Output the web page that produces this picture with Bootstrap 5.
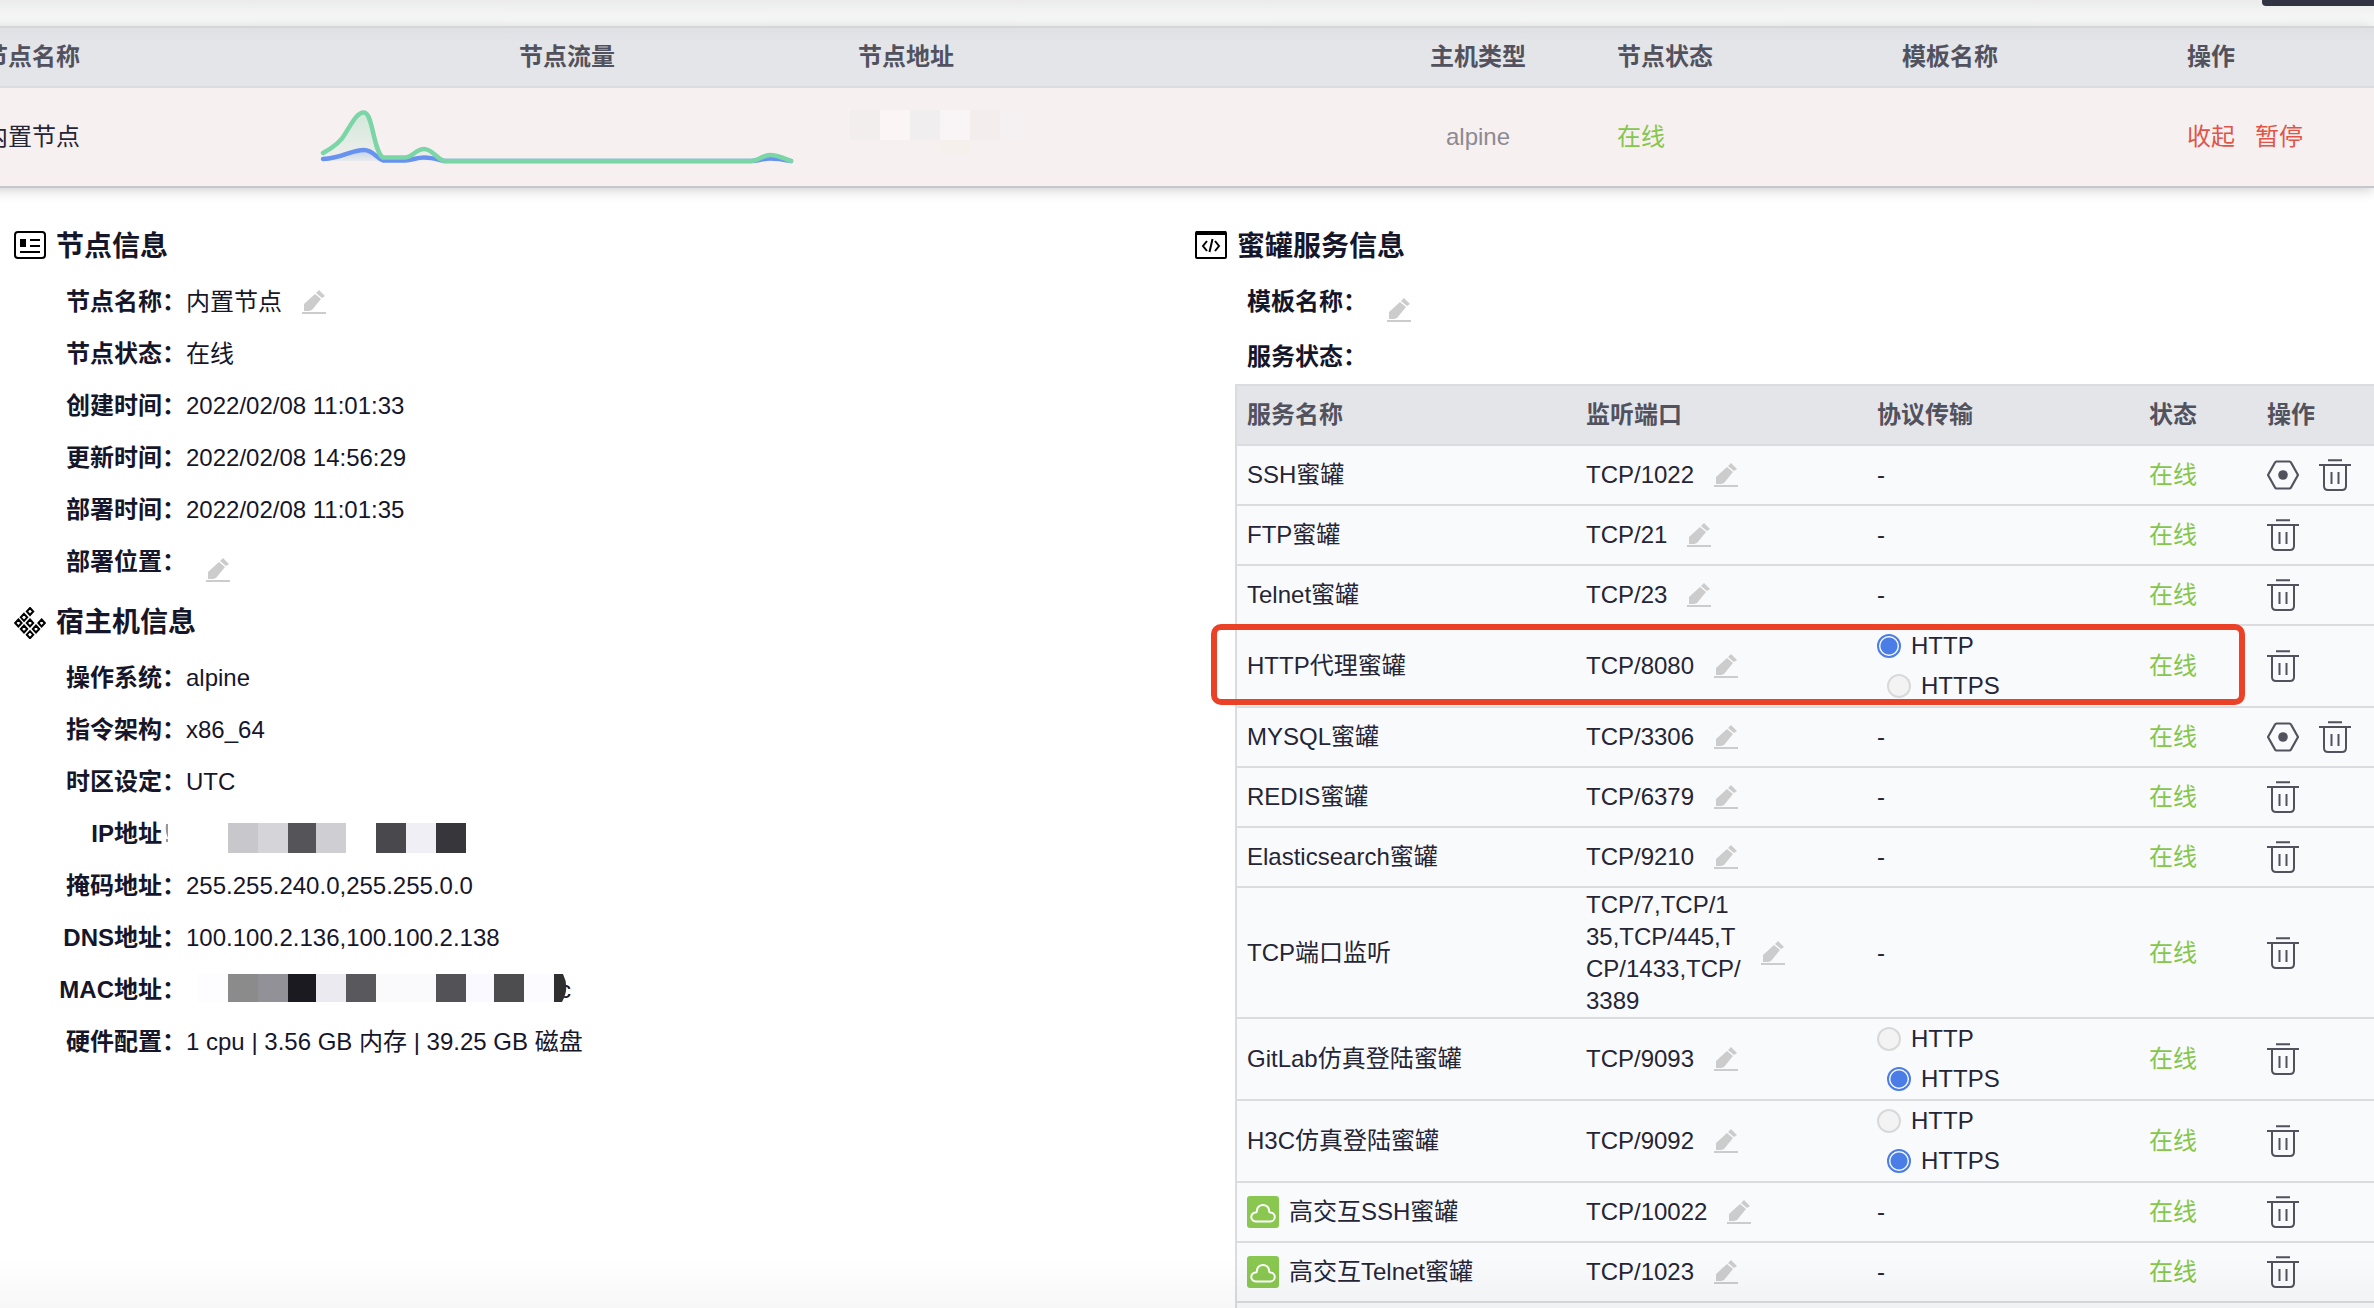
<!DOCTYPE html>
<html lang="zh-CN">
<head>
<meta charset="utf-8">
<meta name="viewport" content="width=device-width, initial-scale=1">
<title>节点管理</title>
<link href="https://cdn.jsdelivr.net/npm/bootstrap@5.3.0/dist/css/bootstrap.min.css" rel="stylesheet">
<style>
  body { font-family: "Liberation Sans", "Noto Sans CJK SC", sans-serif; font-size: 24px; line-height: 32px; color: #16162a; background: #fff; height: 100vh; overflow: hidden; }
  svg { display: block; flex: none; }
  .page-top { height: 26px; background: linear-gradient(#ebebeb, #fafcfb); }
  .top-action { width: 112px; height: 6px; background: #333443; border-radius: 0 0 0 4px; }
  .node-wrap { margin-left: -32px; border-bottom: 2px solid #c5c6ce; box-shadow: 0 2px 12px rgba(0, 0, 0, .2); }
  .grid { table-layout: fixed; width: 100%; margin: 0; border-collapse: separate; border-spacing: 0; }
  .grid th { background: #e4e5e9; color: #52525e; font-weight: 600; height: 62px; border: solid #dadce0; border-width: 2px 0; padding: 0 16px; }
  .grid td { padding: 0 16px; }
  .node-grid th { background: linear-gradient(#dfe0e4, #e4e5e9 14px); border-top-color: #d5d6da; }
  .node-grid td { background: #f7f0f0; height: 98px; color: #252535; }
  .grid .host { color: #8c8a92; }
  .grid .online { color: #85c64c; }
  .addr-blocks { margin-left: -8px; }
  .act-link { color: #df5549; text-decoration: none; }
  .c-name { width: 324px; } .c-flow { width: 550px; } .c-host { width: 246px; } .c-wide { width: 285px; } .c-ops { width: 203px; }
  .node-panel { padding-left: 14px; }
  .panel-title { height: 60px; font-size: 28px; font-weight: 700; margin: 0; gap: 10px; padding-top: 2px; }
  .info-row { height: 52px; }
  .info-label { width: 172px; text-align: right; font-weight: 700; flex: none; }
  .plain-btn { border: 0; background: none; padding: 0; color: #52525e; }
  .pencil { color: #ccc; margin-left: 20px; }
  .pencil-low { align-self: flex-end; margin-bottom: 6px; }
  .mac-blocks { position: relative; z-index: 1; }
  .mac-tail { margin-left: -9px; }
  .svc-label { font-weight: 700; padding-left: 52px; }
  .svc-state { height: 56px; padding-top: 2px; }
  .svc-wrap { margin-left: 40px; border-left: 2px solid #dadce0; }
  .svc-grid th, .svc-grid td { padding: 0 10px; }
  .svc-grid td { background: #f9fafc; color: #252535; border-bottom: 2px solid #dadce0; height: 60px; }
  .svc-grid .tall td { height: 131px; }
  .svc-port { width: 291px; } .svc-proto { width: 272px; } .svc-online { width: 118px; } .svc-ops { width: 117px; }
  .port-list { width: 155px; word-break: break-all; }
  .ops { gap: 20px; }
  .cloud { gap: 10px; }
  .proto-opt { height: 40px; gap: 10px; }
  .proto-opt + .proto-opt { padding-left: 10px; }
  .proto-opt .form-check-input { width: 24px; height: 24px; margin: 0; flex: none; background: #f3f3f3; border: 2px solid #d9d9d9; }
  .proto-opt .form-check-input:checked { border-color: #4a7de6; background: radial-gradient(circle, #4a7de6 8px, #fff 9px) border-box; }
  .focus-row { position: relative; }
  .focus-frame { position: absolute; left: -26px; top: -2px; right: 129px; bottom: 3px; border: 6px solid #ea4127; border-radius: 10px; pointer-events: none; }
  .page-fade { height: 50px; background: linear-gradient(rgba(0, 0, 0, 0), rgba(0, 0, 0, .03)); pointer-events: none; }
</style>
</head>
<body>
<svg width="0" height="0" class="position-absolute" aria-hidden="true">
  <symbol id="i-pencil" viewBox="0 0 24 24"><path fill="currentColor" d="M2 14 13 4l6 5-9 11-3 1H2zM14 3l3-3 6 6-3 2z"/><path fill="currentColor" d="M0 22h24v2H0z"/></symbol>
  <symbol id="i-trash" viewBox="0 0 32 32"><path fill="none" stroke="currentColor" stroke-width="2" d="M9 1.200h14M0 6h32M5 6v21q0 4 4 4h14q4 0 4-4V6M12.500 13v12M19.500 13v12"/></symbol>
  <symbol id="i-hex" viewBox="0 0 32 32"><path fill="none" stroke="currentColor" stroke-width="2.200" stroke-linejoin="round" d="M9.500 2.500h13Q23.500 2.500 24 3.500L31 16l-7 12.500q-.5 1-1.500 1h-13q-1 0-1.500-1L1 16 8 3.500q.5-1 1.500-1z"/><circle cx="16" cy="16" r="4.800" fill="currentColor"/></symbol>
  <symbol id="i-cloud" viewBox="0 0 32 32"><rect width="32" height="32" rx="3" fill="#89c750"/><path fill="none" stroke="#fff" stroke-width="2" d="M9 25.500a4.500 4.500 0 0 1-.5-9q1.500-.3 1.500-2a6 5.500 0 0 1 12 0q0 1.700 1.500 2a4.500 4.500 0 0 1-.5 9z"/></symbol>
</svg>

<header class="page-top d-flex justify-content-end"><div class="top-action"></div></header>

<div class="node-wrap">
  <table class="grid node-grid align-middle">
    <colgroup><col class="c-name"><col class="c-flow"><col><col class="c-host"><col class="c-wide"><col class="c-wide"><col class="c-ops"></colgroup>
    <thead><tr><th>节点名称</th><th class="text-center">节点流量</th><th>节点地址</th><th class="text-center">主机类型</th><th>节点状态</th><th>模板名称</th><th>操作</th></tr></thead>
    <tbody><tr>
      <td>内置节点</td>
      <td>
        <svg width="518" height="60" viewBox="0 0 518 60" role="img" aria-label="节点流量">
          <defs>
            <linearGradient id="gf" x1="0" y1="0" x2="0" y2="1"><stop offset="0" stop-color="#7bd5a7" stop-opacity=".3"/><stop offset="1" stop-color="#7bd5a7" stop-opacity=".05"/></linearGradient>
            <linearGradient id="bf" x1="0" y1="0" x2="0" y2="1"><stop offset="0" stop-color="#6792f0" stop-opacity=".3"/><stop offset="1" stop-color="#6792f0" stop-opacity=".05"/></linearGradient>
          </defs>
          <path fill="url(#gf)" d="M15 46C26 40 33 35 37 27 46 12 50 5.500 56 5.500 65 5.500 65 42 75 50.500H97C105 50 108 42 116 42S128 50 136 54H15z"/>
          <path fill="url(#bf)" d="M15 52C36 51 42 43 56 43 65 43 68 50 75 54H15z"/>
          <g fill="none" stroke-width="4.500" stroke-linecap="round">
            <path stroke="#6792f0" d="M15 52C36 51 42 43 56 43 65 43 68 51 75 53.500H97C105 53 108 50.500 116 50.500S128 52 136 54H443C450 54 455 51.500 462 51.500S478 53 483 54"/>
            <path stroke="#7bd5a7" d="M15 46C26 40 33 35 37 27 46 12 50 5.500 56 5.500 65 5.500 65 44 75 50.500H97C105 50 108 42 116 42S128 51 136 54H443C450 54 455 48 462 48S478 52 483 54"/>
          </g>
        </svg>
      </td>
      <td>
        <svg class="addr-blocks" width="182" height="54" viewBox="0 0 182 54" role="img" aria-label="节点地址已隐藏">
          <path fill="#f3eeee" d="M0 0h30v30H0z"/><path fill="#fbf5f5" d="M30 0h30v30H30z"/><path fill="#f1eeef" d="M60 0h30v30H60z"/><path fill="#f9f5f7" d="M90 0h30v30H90z"/><path fill="#f3eded" d="M120 0h30v30h-30z"/><path fill="#f5f1f2" d="M150 0h26v30h-26z"/><path fill="#f5f0eb" d="M90 30h30v14H90z"/>
        </svg>
      </td>
      <td class="host text-center">alpine</td>
      <td class="online">在线</td>
      <td></td>
      <td><div class="d-flex ops"><a href="#" class="act-link">收起</a><a href="#" class="act-link">暂停</a></div></td>
    </tr></tbody>
  </table>
</div>

<main class="row g-0 pt-4">
  <section class="col-6 pt-1 node-panel">
    <h2 class="panel-title d-flex align-items-center">
      <svg width="32" height="32" viewBox="0 0 32 32"><rect x="1" y="1" width="30" height="26" rx="3" fill="none" stroke="#000" stroke-width="2"/><path d="M6 8h6v8H6zM16 8h10v2H16zM16 14h10v2H16zM6 20h20v2H6z"/></svg>
      节点信息
    </h2>
    <div class="info-row d-flex align-items-center"><span class="info-label">节点名称：</span><span>内置节点</span><button class="plain-btn pencil" aria-label="编辑节点名称"><svg width="24" height="24"><use href="#i-pencil"/></svg></button></div>
    <div class="info-row d-flex align-items-center"><span class="info-label">节点状态：</span><span>在线</span></div>
    <div class="info-row d-flex align-items-center"><span class="info-label">创建时间：</span><span>2022/02/08 11:01:33</span></div>
    <div class="info-row d-flex align-items-center"><span class="info-label">更新时间：</span><span>2022/02/08 14:56:29</span></div>
    <div class="info-row d-flex align-items-center"><span class="info-label">部署时间：</span><span>2022/02/08 11:01:35</span></div>
    <div class="info-row d-flex align-items-center"><span class="info-label">部署位置：</span><button class="plain-btn pencil pencil-low" aria-label="编辑部署位置"><svg width="24" height="24"><use href="#i-pencil"/></svg></button></div>
    <h2 class="panel-title d-flex align-items-center mt-1">
      <svg width="32" height="32" viewBox="0 0 32 32" fill="none" stroke="#000" stroke-width="2"><path d="M16 1l3.200 3.500L16 8l-3.200-3.500zM10 6.800l3.200 3.500L10 13.800l-3.200-3.500zM4.400 12.500 7.600 16l-3.200 3.500L1.200 16zM16 12.500l3.200 3.500-3.200 3.500-3.200-3.500zM27.600 12.500l3.200 3.500-3.200 3.500-3.200-3.500zM10 18.500l3.200 3.500-3.200 3.500L6.800 22zM22 18.500l3.200 3.500-3.200 3.500-3.200-3.500zM16 24.200l3.200 3.500-3.200 3.500-3.200-3.500z"/></svg>
      宿主机信息
    </h2>
    <div class="info-row d-flex align-items-center"><span class="info-label">操作系统：</span><span>alpine</span></div>
    <div class="info-row d-flex align-items-center"><span class="info-label">指令架构：</span><span>x86_64</span></div>
    <div class="info-row d-flex align-items-center"><span class="info-label">时区设定：</span><span>UTC</span></div>
    <div class="info-row d-flex align-items-center"><span class="info-label d-flex justify-content-end">IP地址<svg width="24" height="32" viewBox="0 0 24 32"><path fill="#96959b" d="M4 6q-1 8 2 14V6zM4 21h2v3H4z"/></svg></span>
      <svg width="290" height="40" viewBox="0 0 290 40" role="img" aria-label="IP地址已隐藏"><path fill="#c8c7cc" d="M42 9h30v30H42z"/><path fill="#d5d4d9" d="M72 9h30v30H72z"/><path fill="#555459" d="M102 9h28v30h-28z"/><path fill="#cfced3" d="M130 9h30v30h-30z"/><path fill="#49484d" d="M190 9h30v30h-30z"/><path fill="#f0eff5" d="M220 9h30v30h-30z"/><path fill="#37363a" d="M250 9h30v30h-30z"/></svg></div>
    <div class="info-row d-flex align-items-center"><span class="info-label">掩码地址：</span><span>255.255.240.0,255.255.0.0</span></div>
    <div class="info-row d-flex align-items-center"><span class="info-label">DNS地址：</span><span>100.100.2.136,100.100.2.138</span></div>
    <div class="info-row d-flex align-items-center"><span class="info-label">MAC地址：</span>
      <svg class="mac-blocks" width="382" height="32" viewBox="0 0 382 32" role="img" aria-label="MAC地址已隐藏"><path fill="#fdfcff" d="M12 0h30v28H12z"/><path fill="#8b8b8c" d="M42 0h30v28H42z"/><path fill="#929197" d="M72 0h30v28H72z"/><path fill="#1b1a20" d="M102 0h28v28h-28z"/><path fill="#ebeaf0" d="M130 0h30v28h-30z"/><path fill="#59585d" d="M160 0h30v28h-30z"/><path fill="#fafafc" d="M190 0h60v28h-60z"/><path fill="#535257" d="M250 0h30v28h-30z"/><path fill="#faf9ff" d="M280 0h28v28h-28z"/><path fill="#4d4c4e" d="M308 0h30v28h-30z"/><path fill="#fcfbff" d="M338 0h30v28h-30z"/><path fill="#2f2f30" d="M368 0h9q7 14-1 28h-8z"/></svg><span class="mac-tail">c</span></div>
    <div class="info-row d-flex align-items-center"><span class="info-label">硬件配置：</span><span>1 cpu | 3.56 GB 内存 | 39.25 GB 磁盘</span></div>
  </section>

  <section class="col-6 pt-1 ps-2">
    <h2 class="panel-title d-flex align-items-center">
      <svg width="32" height="32" viewBox="0 0 32 32" fill="none" stroke="#000" stroke-width="2"><rect x="1" y="1" width="30" height="26" rx="1"/><path stroke-width="4" d="M1 2h30"/><path d="M12 10l-4 5 4 5M20 10l4 5-4 5M17.500 8l-3 13"/></svg>
      蜜罐服务信息
    </h2>
    <div class="info-row svc-label d-flex align-items-center">模板名称：<button class="plain-btn pencil pencil-low" aria-label="编辑模板名称"><svg width="24" height="24"><use href="#i-pencil"/></svg></button></div>
    <div class="svc-state svc-label d-flex align-items-center">服务状态：</div>
    <div class="svc-wrap">
      <table class="grid svc-grid align-middle">
        <colgroup><col><col class="svc-port"><col class="svc-proto"><col class="svc-online"><col class="svc-ops"></colgroup>
        <thead><tr><th>服务名称</th><th>监听端口</th><th>协议传输</th><th>状态</th><th>操作</th></tr></thead>
        <tbody>
          <tr><td>SSH蜜罐</td><td><div class="d-flex align-items-center">TCP/1022<button class="plain-btn pencil" aria-label="编辑端口"><svg width="24" height="24"><use href="#i-pencil"/></svg></button></div></td><td>-</td><td class="online">在线</td><td><div class="d-flex ops"><button class="plain-btn" aria-label="设置"><svg width="32" height="32"><use href="#i-hex"/></svg></button><button class="plain-btn" aria-label="删除"><svg width="32" height="32"><use href="#i-trash"/></svg></button></div></td></tr>
          <tr><td>FTP蜜罐</td><td><div class="d-flex align-items-center">TCP/21<button class="plain-btn pencil" aria-label="编辑端口"><svg width="24" height="24"><use href="#i-pencil"/></svg></button></div></td><td>-</td><td class="online">在线</td><td><div class="d-flex ops"><button class="plain-btn" aria-label="删除"><svg width="32" height="32"><use href="#i-trash"/></svg></button></div></td></tr>
          <tr><td>Telnet蜜罐</td><td><div class="d-flex align-items-center">TCP/23<button class="plain-btn pencil" aria-label="编辑端口"><svg width="24" height="24"><use href="#i-pencil"/></svg></button></div></td><td>-</td><td class="online">在线</td><td><div class="d-flex ops"><button class="plain-btn" aria-label="删除"><svg width="32" height="32"><use href="#i-trash"/></svg></button></div></td></tr>
          <tr class="focus-row"><td>HTTP代理蜜罐<div class="focus-frame"></div></td><td><div class="d-flex align-items-center">TCP/8080<button class="plain-btn pencil" aria-label="编辑端口"><svg width="24" height="24"><use href="#i-pencil"/></svg></button></div></td><td><div class="proto-opt d-flex align-items-center"><input class="form-check-input" type="radio" name="p1" id="p1a" checked><label for="p1a">HTTP</label></div><div class="proto-opt d-flex align-items-center"><input class="form-check-input" type="radio" name="p1" id="p1b"><label for="p1b">HTTPS</label></div></td><td class="online">在线</td><td><div class="d-flex ops"><button class="plain-btn" aria-label="删除"><svg width="32" height="32"><use href="#i-trash"/></svg></button></div></td></tr>
          <tr><td>MYSQL蜜罐</td><td><div class="d-flex align-items-center">TCP/3306<button class="plain-btn pencil" aria-label="编辑端口"><svg width="24" height="24"><use href="#i-pencil"/></svg></button></div></td><td>-</td><td class="online">在线</td><td><div class="d-flex ops"><button class="plain-btn" aria-label="设置"><svg width="32" height="32"><use href="#i-hex"/></svg></button><button class="plain-btn" aria-label="删除"><svg width="32" height="32"><use href="#i-trash"/></svg></button></div></td></tr>
          <tr><td>REDIS蜜罐</td><td><div class="d-flex align-items-center">TCP/6379<button class="plain-btn pencil" aria-label="编辑端口"><svg width="24" height="24"><use href="#i-pencil"/></svg></button></div></td><td>-</td><td class="online">在线</td><td><div class="d-flex ops"><button class="plain-btn" aria-label="删除"><svg width="32" height="32"><use href="#i-trash"/></svg></button></div></td></tr>
          <tr><td>Elasticsearch蜜罐</td><td><div class="d-flex align-items-center">TCP/9210<button class="plain-btn pencil" aria-label="编辑端口"><svg width="24" height="24"><use href="#i-pencil"/></svg></button></div></td><td>-</td><td class="online">在线</td><td><div class="d-flex ops"><button class="plain-btn" aria-label="删除"><svg width="32" height="32"><use href="#i-trash"/></svg></button></div></td></tr>
          <tr class="tall"><td>TCP端口监听</td><td><div class="d-flex align-items-center"><span class="port-list">TCP/7,TCP/135,TCP/445,TCP/1433,TCP/3389</span><button class="plain-btn pencil" aria-label="编辑端口"><svg width="24" height="24"><use href="#i-pencil"/></svg></button></div></td><td>-</td><td class="online">在线</td><td><div class="d-flex ops"><button class="plain-btn" aria-label="删除"><svg width="32" height="32"><use href="#i-trash"/></svg></button></div></td></tr>
          <tr><td>GitLab仿真登陆蜜罐</td><td><div class="d-flex align-items-center">TCP/9093<button class="plain-btn pencil" aria-label="编辑端口"><svg width="24" height="24"><use href="#i-pencil"/></svg></button></div></td><td><div class="proto-opt d-flex align-items-center"><input class="form-check-input" type="radio" name="p2" id="p2a"><label for="p2a">HTTP</label></div><div class="proto-opt d-flex align-items-center"><input class="form-check-input" type="radio" name="p2" id="p2b" checked><label for="p2b">HTTPS</label></div></td><td class="online">在线</td><td><div class="d-flex ops"><button class="plain-btn" aria-label="删除"><svg width="32" height="32"><use href="#i-trash"/></svg></button></div></td></tr>
          <tr><td>H3C仿真登陆蜜罐</td><td><div class="d-flex align-items-center">TCP/9092<button class="plain-btn pencil" aria-label="编辑端口"><svg width="24" height="24"><use href="#i-pencil"/></svg></button></div></td><td><div class="proto-opt d-flex align-items-center"><input class="form-check-input" type="radio" name="p3" id="p3a"><label for="p3a">HTTP</label></div><div class="proto-opt d-flex align-items-center"><input class="form-check-input" type="radio" name="p3" id="p3b" checked><label for="p3b">HTTPS</label></div></td><td class="online">在线</td><td><div class="d-flex ops"><button class="plain-btn" aria-label="删除"><svg width="32" height="32"><use href="#i-trash"/></svg></button></div></td></tr>
          <tr><td><div class="d-flex cloud"><svg width="32" height="32"><use href="#i-cloud"/></svg>高交互SSH蜜罐</div></td><td><div class="d-flex align-items-center">TCP/10022<button class="plain-btn pencil" aria-label="编辑端口"><svg width="24" height="24"><use href="#i-pencil"/></svg></button></div></td><td>-</td><td class="online">在线</td><td><div class="d-flex ops"><button class="plain-btn" aria-label="删除"><svg width="32" height="32"><use href="#i-trash"/></svg></button></div></td></tr>
          <tr><td><div class="d-flex cloud"><svg width="32" height="32"><use href="#i-cloud"/></svg>高交互Telnet蜜罐</div></td><td><div class="d-flex align-items-center">TCP/1023<button class="plain-btn pencil" aria-label="编辑端口"><svg width="24" height="24"><use href="#i-pencil"/></svg></button></div></td><td>-</td><td class="online">在线</td><td><div class="d-flex ops"><button class="plain-btn" aria-label="删除"><svg width="32" height="32"><use href="#i-trash"/></svg></button></div></td></tr>
          <tr><td></td><td></td><td></td><td></td><td></td></tr>
        </tbody>
      </table>
    </div>
  </section>
</main>
<div class="page-fade fixed-bottom"></div>
<script src="https://cdn.jsdelivr.net/npm/bootstrap@5.3.0/dist/js/bootstrap.bundle.min.js"></script>
</body>
</html>
